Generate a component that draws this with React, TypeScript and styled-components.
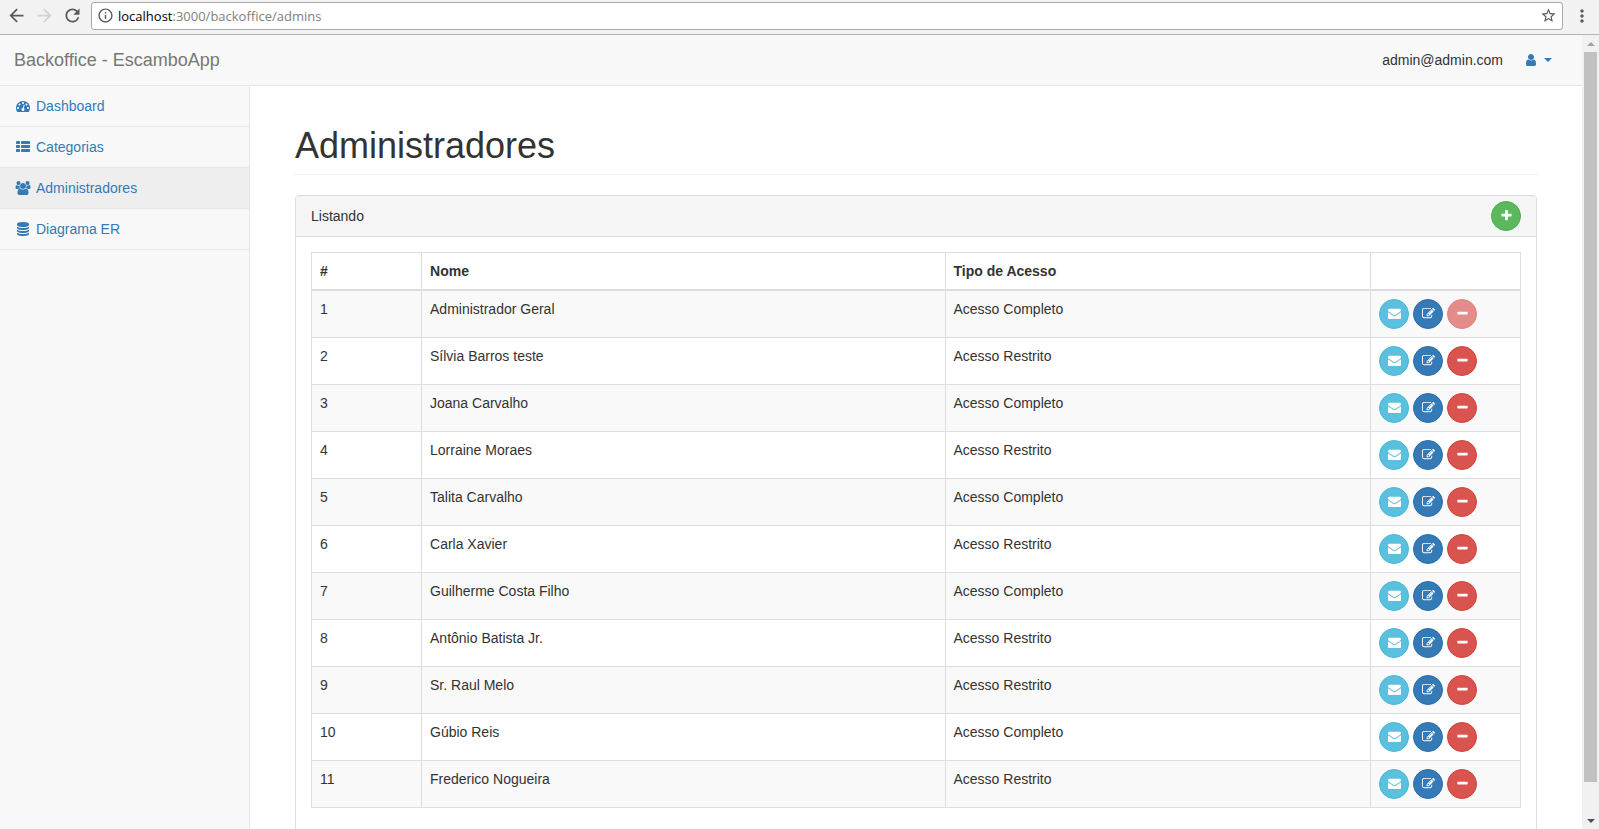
import React from "react";
import styled, { createGlobalStyle, css } from "styled-components";
import {
  MdArrowBack,
  MdArrowForward,
  MdInfoOutline,
  MdMoreVert,
  MdRefresh,
  MdStarBorder,
} from "react-icons/md";

const GlobalStyle = createGlobalStyle`
  *, *::before, *::after { box-sizing: border-box; }
  body {
    margin: 0;
    font-family: "Liberation Sans", Arial, sans-serif;
    font-size: 14px;
    line-height: 20px;
    color: #333;
    background: #fff;
  }
  button, input { font: inherit; }
`;

/* ---------- icons ---------- */

const iconPaths = {
  dashboard:
    "M384 1152q0-53-37.5-90.5t-90.5-37.5-90.5 37.5-37.5 90.5 37.5 90.5 90.5 37.5 90.5-37.5 37.5-90.5zm192-448q0-53-37.5-90.5t-90.5-37.5-90.5 37.5-37.5 90.5 37.5 90.5 90.5 37.5 90.5-37.5 37.5-90.5zm428 481l101-382q6-26-7.5-48.5t-38.5-29.5-48 6.5-30 39.5l-101 382q-60 5-107 43.5t-63 98.5q-20 77 20 146t117 89 146-20 89-117q16-60-6-117t-72-91zm660-33q0-53-37.5-90.5t-90.5-37.5-90.5 37.5-37.5 90.5 37.5 90.5 90.5 37.5 90.5-37.5 37.5-90.5zm-640-640q0-53-37.5-90.5t-90.5-37.5-90.5 37.5-37.5 90.5 37.5 90.5 90.5 37.5 90.5-37.5 37.5-90.5zm448 192q0-53-37.5-90.5t-90.5-37.5-90.5 37.5-37.5 90.5 37.5 90.5 90.5 37.5 90.5-37.5 37.5-90.5zm320 448q0 261-141 483-19 29-54 29h-1402q-35 0-54-29-141-221-141-483 0-182 71-348t191-286 286-191 348-71 348 71 286 191 191 286 71 348z",
  list:
    "M512 1248v192q0 40-28 68t-68 28h-320q-40 0-68-28t-28-68v-192q0-40 28-68t68-28h320q40 0 68 28t28 68zm0-512v192q0 40-28 68t-68 28h-320q-40 0-68-28t-28-68v-192q0-40 28-68t68-28h320q40 0 68 28t28 68zm1280 512v192q0 40-28 68t-68 28h-960q-40 0-68-28t-28-68v-192q0-40 28-68t68-28h960q40 0 68 28t28 68zm-1280-1024v192q0 40-28 68t-68 28h-320q-40 0-68-28t-28-68v-192q0-40 28-68t68-28h320q40 0 68 28t28 68zm1280 512v192q0 40-28 68t-68 28h-960q-40 0-68-28t-28-68v-192q0-40 28-68t68-28h960q40 0 68 28t28 68zm0-512v192q0 40-28 68t-68 28h-960q-40 0-68-28t-28-68v-192q0-40 28-68t68-28h960q40 0 68 28t28 68z",
  users:
    "M657 896q-162 5-265 128h-134q-82 0-138-40.5t-56-118.5q0-353 124-353 6 0 43.5 21t97.5 42.5 119 21.5q67 0 133-23-5 37-5 66 0 159 93 291zm1071 637q0 120-73 189.5t-194 69.5h-874q-121 0-194-69.5t-73-189.5q0-53 3.5-103.5t14-109 26.5-108.5 43-97.5 62-81 85.5-53.5 111.5-20q10 0 43 21.5t73 48 107 48 135 21.5 135-21.5 107-48 73-48 43-21.5q61 0 111.5 20t85.5 53.5 62 81 43 97.5 26.5 108.5 14 109 3.5 103.5zm-1024-1277q0 106-75 181t-181 75-181-75-75-181 75-181 181-75 181 75 75 181zm704 384q0 159-112.5 271.5t-271.5 112.5-271.5-112.5-112.5-271.5 112.5-271.5 271.5-112.5 271.5 112.5 112.5 271.5zm576 225q0 78-56 118.5t-138 40.5h-134q-103-123-265-128 93-132 93-291 0-29-5-66 66 23 133 23 59 0 119-21.5t97.5-42.5 43.5-21q124 0 124 353zm-128-609q0 106-75 181t-181 75-181-75-75-181 75-181 181-75 181 75 75 181z",
  database:
    "M896 768q237 0 443-43t325-127v170q0 69-103 128t-280 93.5-385 34.5-385-34.5-280-93.5-103-128v-170q119 84 325 127t443 43zm0 768q237 0 443-43t325-127v170q0 69-103 128t-280 93.5-385 34.5-385-34.5-280-93.5-103-128v-170q119 84 325 127t443 43zm0-384q237 0 443-43t325-127v170q0 69-103 128t-280 93.5-385 34.5-385-34.5-280-93.5-103-128v-170q119 84 325 127t443 43zm0-1152q208 0 385 34.5t280 93.5 103 128v128q0 69-103 128t-280 93.5-385 34.5-385-34.5-280-93.5-103-128v-128q0-69 103-128t280-93.5 385-34.5z",
  user:
    "M1536 1399q0 109-62.5 187t-150.5 78h-854q-88 0-150.5-78t-62.5-187q0-85 8.5-160.5t31.5-152 58.5-131 94-89 134.5-34.5q131 128 313 128t313-128q76 0 134.5 34.5t94 89 58.5 131 31.5 152 8.5 160.5zm-256-887q0 159-112.5 271.5t-271.5 112.5-271.5-112.5-112.5-271.5 112.5-271.5 271.5-112.5 271.5 112.5 112.5 271.5z",
  envelope:
    "M1792 710v794q0 66-47 113t-113 47h-1472q-66 0-113-47t-47-113v-794q44 49 101 87 362 246 497 345 57 42 92.5 65.5t94.5 48 110 24.5h2q51 0 110-24.5t94.5-48 92.5-65.5q170-123 498-345 57-39 100-87zm0-294q0 79-49 151t-122 123q-376 261-468 325-10 7-42.5 31t-54 38.5-52 32.5-57.5 27-50 9h-2q-23 0-50-9t-57.5-27-52-32.5-54-38.5-42.5-31q-91-64-262-182.5t-205-142.5q-62-42-117-115.5t-55-136.5q0-78 41.5-130t118.5-52h1472q65 0 112.5 47t47.5 113z",
  edit:
    "M888 1184l116-116-152-152-116 116v56h96v96h56zm440-720q-16-16-33 1l-350 350q-17 17-1 33t33-1l350-350q17-17 1-33zm80 594v190q0 119-84.5 203.5t-203.5 84.5h-832q-119 0-203.5-84.5t-84.5-203.5v-832q0-119 84.5-203.5t203.5-84.5h832q63 0 117 25 15 7 18 23 3 17-9 29l-49 49q-14 14-32 8-23-6-45-6h-832q-66 0-113 47t-47 113v832q0 66 47 113t113 47h832q66 0 113-47t47-113v-126q0-13 9-22l64-64q15-15 35-7t20 29zm-96-738l288 288-672 672h-288v-288zm444 132l-92 92-288-288 92-92q28-28 68-28t68 28l152 152q28 28 28 68t-28 68z",
  plus:
    "M1600 736v192q0 40-28 68t-68 28h-416v416q0 40-28 68t-68 28h-192q-40 0-68-28t-28-68v-416h-416q-40 0-68-28t-28-68v-192q0-40 28-68t68-28h416v-416q0-40 28-68t68-28h192q40 0 68 28t28 68v416h416q40 0 68 28t28 68z",
  minus:
    "M1600 736v192q0 40-28 68t-68 28h-1216q-40 0-68-28t-28-68v-192q0-40 28-68t68-28h1216q40 0 68 28t28 68z",
};

type IconName = keyof typeof iconPaths;

const Glyph = styled.svg<{ $width: number; $height: number }>`
  display: block;
  flex: none;
  width: ${(p) => p.$width}px;
  height: ${(p) => p.$height}px;
  fill: currentColor;
`;

function Icon({ name, size = 14 }: { name: IconName; size?: number }) {
  const wide = name === "users";
  return (
    <Glyph
      $width={wide ? size + 2 : size}
      $height={size}
      viewBox={wide ? "0 0 2048 1792" : "0 0 1792 1792"}
      aria-hidden="true"
    >
      <path d={iconPaths[name]} />
    </Glyph>
  );
}

/* ---------- browser frame ---------- */

const Window = styled.div`
  display: flex;
  flex-direction: column;
  height: 100vh;
  overflow: hidden;
`;

const Toolbar = styled.div`
  display: flex;
  flex: none;
  align-items: center;
  height: 35px;
  padding: 0 6px 3px 5px;
  background: #f2f2f2;
  border-bottom: 1px solid #b4b4b4;
`;

const ToolButton = styled.button<{ $last?: boolean }>`
  display: flex;
  flex: none;
  align-items: center;
  justify-content: center;
  width: 22px;
  height: 22px;
  margin: ${(p) => (p.$last ? "0 0 0 8px" : "0 6px 0 0")};
  padding: 0;
  border: 0;
  background: none;
  color: #5a5a5a;

  &:disabled {
    color: #d2d2d2;
  }
`;

const AddressBar = styled.div`
  display: flex;
  flex: 1;
  align-items: center;
  height: 28px;
  margin-left: 2px;
  padding: 0 5px;
  border: 1px solid #a9a9a9;
  border-radius: 3px;
  background: #fff;
  color: #5a5a5a;
  font-family: "Open Sans", sans-serif;
  font-size: 13px;

  svg {
    flex: none;
  }
`;

const Host = styled.label`
  margin-left: 4px;
  color: #000;
`;

const UrlInput = styled.input`
  flex: 1;
  min-width: 0;
  padding: 0;
  border: 0;
  outline: 0;
  background: none;
  color: #808080;
`;

const StarButton = styled.button`
  display: flex;
  padding: 0;
  border: 0;
  background: none;
  color: #5a5a5a;
`;

const Viewport = styled.div`
  display: flex;
  flex: 1;
  min-height: 0;
`;

const Page = styled.div`
  display: flex;
  flex: 1;
  flex-direction: column;
  min-width: 0;
  overflow: hidden;
`;

const ScrollBar = styled.div`
  display: flex;
  flex: none;
  flex-direction: column;
  width: 17px;
  background: #f1f1f1;
`;

const ScrollArrow = styled.div<{ $down?: boolean }>`
  display: flex;
  flex: none;
  align-items: center;
  justify-content: center;
  height: 17px;

  &::before {
    content: "";
    border: 4px solid transparent;
    ${(p) =>
      p.$down
        ? css`
            border-top-color: #505050;
            border-bottom: 0;
          `
        : css`
            border-bottom-color: #a3a3a3;
            border-top: 0;
          `}
  }
`;

const ScrollTrack = styled.div`
  flex: 1;
  padding: 0 2px;
`;

const ScrollThumb = styled.div`
  height: 96%;
  background: #c1c1c1;
`;

/* ---------- navigation ---------- */

const Navbar = styled.header`
  display: flex;
  flex: none;
  align-items: center;
  justify-content: space-between;
  height: 51px;
  padding: 0 15px 0 14px;
  border-bottom: 1px solid #e7e7e7;
  background: #f8f8f8;
`;

const Brand = styled.a`
  color: #777;
  font-size: 18px;
  text-decoration: none;
`;

const Account = styled.div`
  display: flex;
  align-items: center;
`;

const AccountButton = styled.button`
  display: flex;
  align-items: center;
  gap: 6px;
  height: 50px;
  padding: 0 15px 0 21px;
  border: 0;
  background: none;
  color: #337ab7;
`;

const Caret = styled.span`
  border: 4px solid transparent;
  border-top-color: currentColor;
  border-bottom: 0;
`;

const Body = styled.div`
  display: flex;
  flex: 1;
  min-height: 0;
`;

const Sidebar = styled.nav`
  flex: none;
  width: 250px;
  border-right: 1px solid #e7e7e7;
  background: #f8f8f8;
`;

const Menu = styled.ul`
  margin: 0;
  padding: 0;
  list-style: none;
`;

const MenuLink = styled.a<{ $active?: boolean }>`
  display: flex;
  align-items: center;
  gap: 4px;
  padding: 10px 14px;
  border-bottom: 1px solid #e7e7e7;
  background: ${(p) => (p.$active ? "#eee" : "transparent")};
  color: #337ab7;
  text-decoration: none;
`;

const MenuIcon = styled.span`
  display: flex;
  flex: none;
  justify-content: center;
  width: 18px;
`;

/* ---------- content ---------- */

const Content = styled.main`
  flex: 1;
  min-width: 0;
  padding: 0 45px;
`;

const Title = styled.h1`
  margin: 40px 0 20px;
  padding-bottom: 9px;
  border-bottom: 1px solid #eee;
  font-size: 36px;
  font-weight: 400;
  line-height: 39px;
`;

const Panel = styled.section`
  border: 1px solid #ddd;
  border-radius: 4px;
  background: #fff;
`;

const PanelHeading = styled.div`
  display: flex;
  align-items: center;
  justify-content: space-between;
  height: 41px;
  padding: 0 15px;
  border-bottom: 1px solid #ddd;
  border-radius: 3px 3px 0 0;
  background: #f5f5f5;
`;

const PanelBody = styled.div`
  padding: 15px 15px 35px;
`;

const DataTable = styled.table`
  width: 100%;
  border-collapse: collapse;
  table-layout: fixed;
  border: 1px solid #ddd;

  th,
  td {
    padding: 8px;
    border: 1px solid #ddd;
    text-align: left;
    vertical-align: top;
  }

  th {
    border-bottom-width: 2px;
  }

  tbody tr:nth-child(odd) {
    background: #f9f9f9;
  }
`;

const Column = styled.col<{ $width?: string }>`
  width: ${(p) => p.$width ?? "auto"};
`;

const Actions = styled.div`
  display: flex;
  gap: 4px;
`;

const tones = {
  info: ["#5bc0de", "#46b8da"],
  primary: ["#337ab7", "#2e6da4"],
  danger: ["#d9534f", "#d43f3a"],
  success: ["#5cb85c", "#4cae4c"],
};

const CircleButton = styled.button<{ $tone: keyof typeof tones }>`
  display: flex;
  flex: none;
  align-items: center;
  justify-content: center;
  width: 30px;
  height: 30px;
  padding: 0 0 1px;
  border: 1px solid ${(p) => tones[p.$tone][1]};
  border-radius: 50%;
  background: ${(p) => tones[p.$tone][0]};
  color: #fff;

  &:disabled {
    opacity: 0.65;
  }
`;

const menu: { label: string; icon: IconName; active?: boolean }[] = [
  { label: "Dashboard", icon: "dashboard" },
  { label: "Categorias", icon: "list" },
  { label: "Administradores", icon: "users", active: true },
  { label: "Diagrama ER", icon: "database" },
];

const admins = [
  { name: "Administrador Geral", full: true },
  { name: "Sílvia Barros teste", full: false },
  { name: "Joana Carvalho", full: true },
  { name: "Lorraine Moraes", full: false },
  { name: "Talita Carvalho", full: true },
  { name: "Carla Xavier", full: false },
  { name: "Guilherme Costa Filho", full: true },
  { name: "Antônio Batista Jr.", full: false },
  { name: "Sr. Raul Melo", full: false },
  { name: "Gúbio Reis", full: true },
  { name: "Frederico Nogueira", full: false },
];

function BrowserToolbar() {
  return (
    <Toolbar>
      <ToolButton aria-label="Voltar">
        <MdArrowBack size={21} />
      </ToolButton>
      <ToolButton aria-label="Avançar" disabled>
        <MdArrowForward size={21} />
      </ToolButton>
      <ToolButton aria-label="Recarregar">
        <MdRefresh size={21} />
      </ToolButton>
      <AddressBar>
        <MdInfoOutline size={17} />
        <Host htmlFor="url">localhost</Host>
        <UrlInput id="url" type="text" defaultValue=":3000/backoffice/admins" />
        <StarButton aria-label="Favoritar">
          <MdStarBorder size={17} />
        </StarButton>
      </AddressBar>
      <ToolButton aria-label="Menu" $last>
        <MdMoreVert size={20} />
      </ToolButton>
    </Toolbar>
  );
}

function AdminTable() {
  return (
    <DataTable>
      <colgroup>
        <Column $width="9.1%" />
        <Column $width="43.3%" />
        <Column $width="35.2%" />
        <Column />
      </colgroup>
      <thead>
        <tr>
          <th scope="col">#</th>
          <th scope="col">Nome</th>
          <th scope="col">Tipo de Acesso</th>
          <th scope="col" aria-label="Ações" />
        </tr>
      </thead>
      <tbody>
        {admins.map((admin, index) => (
          <tr key={admin.name}>
            <td>{index + 1}</td>
            <td>{admin.name}</td>
            <td>{admin.full ? "Acesso Completo" : "Acesso Restrito"}</td>
            <td>
              <Actions>
                <CircleButton $tone="info" aria-label={`Enviar mensagem para ${admin.name}`}>
                  <Icon name="envelope" size={13} />
                </CircleButton>
                <CircleButton $tone="primary" aria-label={`Editar ${admin.name}`}>
                  <Icon name="edit" size={13} />
                </CircleButton>
                <CircleButton
                  $tone="danger"
                  aria-label={`Excluir ${admin.name}`}
                  disabled={index === 0}
                >
                  <Icon name="minus" size={13} />
                </CircleButton>
              </Actions>
            </td>
          </tr>
        ))}
      </tbody>
    </DataTable>
  );
}

export default function App() {
  return (
    <Window>
      <GlobalStyle />
      <BrowserToolbar />
      <Viewport>
        <Page>
          <Navbar>
            <Brand href="#">Backoffice - EscamboApp</Brand>
            <Account>
              <span>admin@admin.com</span>
              <AccountButton aria-label="Conta" aria-haspopup="menu">
                <Icon name="user" />
                <Caret />
              </AccountButton>
            </Account>
          </Navbar>
          <Body>
            <Sidebar>
              <Menu>
                {menu.map((item) => (
                  <li key={item.label}>
                    <MenuLink href="#" $active={item.active}>
                      <MenuIcon>
                        <Icon name={item.icon} />
                      </MenuIcon>
                      {item.label}
                    </MenuLink>
                  </li>
                ))}
              </Menu>
            </Sidebar>
            <Content>
              <Title>Administradores</Title>
              <Panel>
                <PanelHeading>
                  Listando
                  <CircleButton $tone="success" aria-label="Adicionar administrador">
                    <Icon name="plus" size={13} />
                  </CircleButton>
                </PanelHeading>
                <PanelBody>
                  <AdminTable />
                </PanelBody>
              </Panel>
            </Content>
          </Body>
        </Page>
        <ScrollBar aria-hidden="true">
          <ScrollArrow />
          <ScrollTrack>
            <ScrollThumb />
          </ScrollTrack>
          <ScrollArrow $down />
        </ScrollBar>
      </Viewport>
    </Window>
  );
}
